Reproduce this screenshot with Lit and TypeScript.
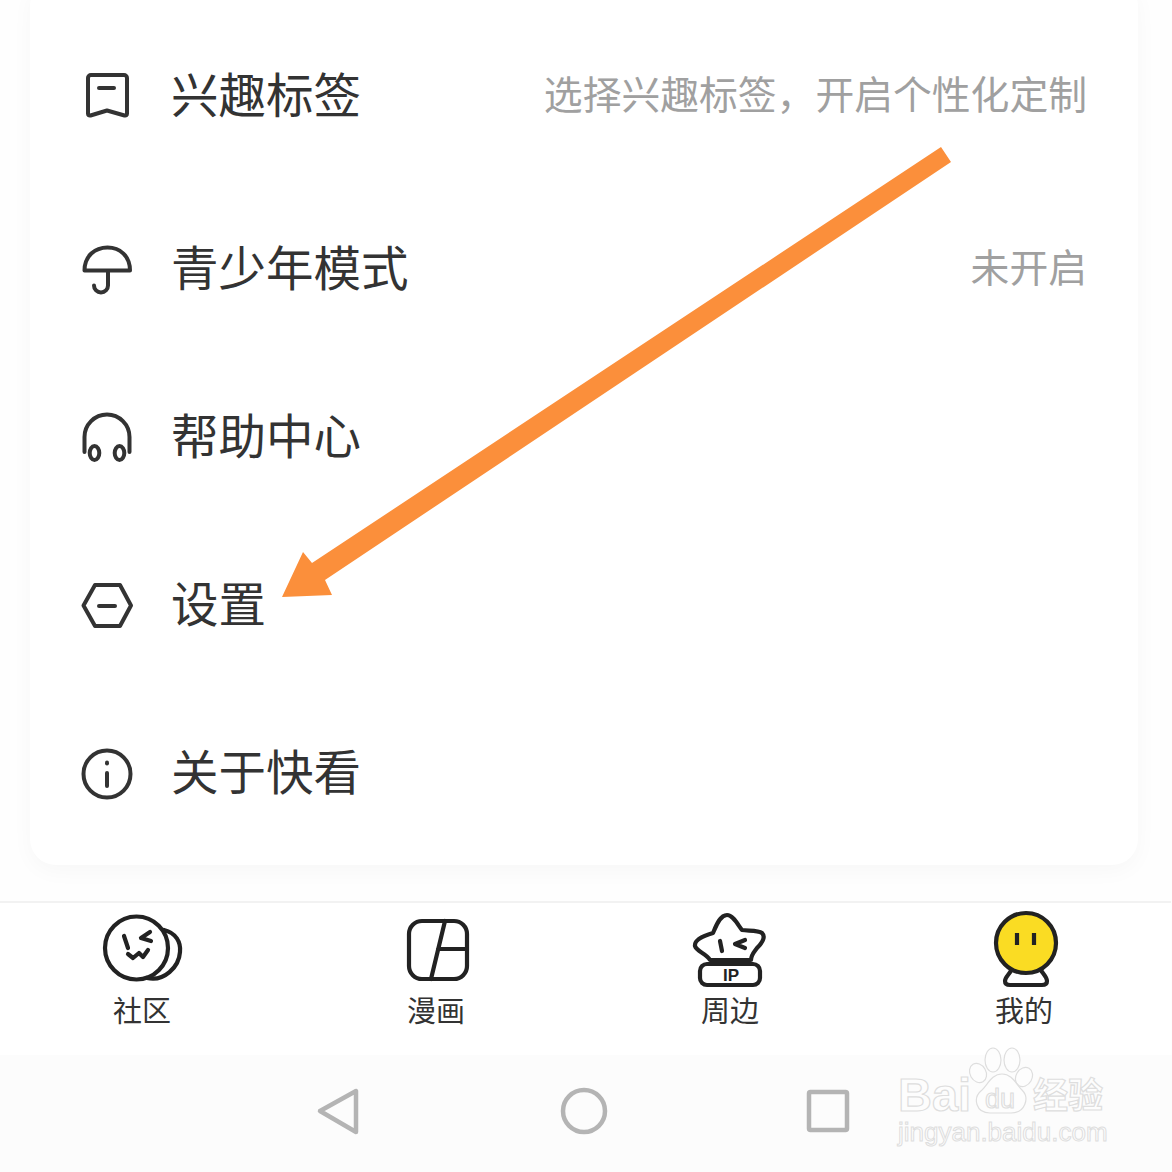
import { LitElement, html, svg, css } from 'lit';
import { customElement } from 'lit/decorators.js';

const rows = [
  {
    label: '兴趣标签',
    hint: '选择兴趣标签，开启个性化定制',
    icon: svg`<path d="M12 8H45a3 3 0 0 1 3 3V46.500q0 2.500-2.500 2L28 43.500 11.500 48.500q-2.500.5-2.500-2V11a3 3 0 0 1 3-3Z"/><path d="M20 21H35"/>`,
  },
  {
    label: '青少年模式',
    hint: '未开启',
    icon: svg`<path d="M5.500 30.500C5.500 16 16 7.500 28.500 7.500S51 16 51 30.500Z"/><path d="M29 31V45.500a7 7 0 0 1-14 0"/>`,
  },
  {
    label: '帮助中心',
    hint: '',
    icon: svg`<path d="M5.500 44V29a22.500 22.500 0 0 1 45 0V44"/><ellipse cx="15.500" cy="45" rx="4.800" ry="7"/><ellipse cx="40.500" cy="45" rx="4.800" ry="7"/>`,
  },
  {
    label: '设置',
    hint: '',
    icon: svg`<path d="M4.500 29.500 16 9H41L52 29.500 41 50H16Z"/><path d="M20 30H36"/>`,
  },
  {
    label: '关于快看',
    hint: '',
    icon: svg`<circle cx="28" cy="30" r="23.500"/><path d="M28 29V42"/><path d="M28 18.500V19.500"/>`,
  },
];

const tabs = [
  {
    label: '社区',
    box: '92 908 100 80',
    icon: svg`
      <path d="M164 929C176 932 181 941 180 951C179 966 164 981 147 977"/>
      <circle cx="136.500" cy="947" r="31.500"/>
      <path d="M124 935 128 947M150 931 141 937 151 940M128 953 133 957 139 952 143 956 148 949"/>`,
  },
  {
    label: '漫画',
    box: '386 908 100 80',
    icon: svg`
      <rect x="409" y="920" width="58" height="58" rx="13"/>
      <path d="M445 920 431 978M438 948H467"/>`,
  },
  {
    label: '周边',
    box: '680 908 100 80',
    icon: svg`
      <path d="M713 932C716 925 720 914 727 914C733 914 738 924 742 929C748 930 758 929 762 932C766 936 763 941 757 947C754 951 751 954 751 959H710C706 952 697 951 695 945C694 938 706 934 713 932Z"/>
      <rect x="700" y="963" width="60" height="21" rx="7"/>
      <path d="M720 940 722 950M745 939 735 943 745 947"/>
      <text x="731" y="980" class="ip">IP</text>`,
  },
  {
    label: '我的',
    box: '974 908 100 80',
    icon: svg`
      <path d="M1012 968C1009 974 1005 976 1005 980Q1005 984 1010 984H1042Q1047 984 1047 980C1047 976 1044 974 1040 968"/>
      <circle cx="1026" cy="942" r="30" fill="#fadc23"/>
      <path d="M1017 932V944M1034 932V944" stroke-linecap="butt"/>`,
  },
];

@customElement('app-root')
export class AppRoot extends LitElement {
  static styles = css`
    :host {
      display: block;
      position: relative;
      width: 1172px;
      height: 1172px;
      overflow: hidden;
      background: #fefefe;
      font-family: 'Noto Sans CJK SC', 'Noto Sans', sans-serif;
      color: #333;
    }
    .card {
      margin: -20px 34px 36px 30px;
      padding: 31px 52px 9px 49px;
      height: 885px;
      box-sizing: border-box;
      background: #fff;
      border-radius: 26px;
      box-shadow: 0 6px 22px rgba(0, 0, 0, 0.03);
    }
    .row {
      display: flex;
      align-items: center;
      height: 168px;
    }
    .row:first-child {
      margin-bottom: 5px;
    }
    .row-icon {
      width: 56px;
      height: 56px;
      margin-right: 36px;
      flex: none;
      fill: none;
      stroke: #333;
      stroke-width: 4;
      stroke-linecap: round;
      stroke-linejoin: round;
    }
    .label {
      font-size: 47.5px;
      line-height: 60px;
      margin-top: -5px;
    }
    .hint {
      margin-left: auto;
      margin-right: -1px;
      margin-top: -6px;
      font-size: 38.8px;
      line-height: 50px;
      color: #a0a0a0;
    }
    .tabs {
      display: grid;
      grid-template-columns: repeat(4, 294px);
      margin-left: -5px;
      width: 1176px;
      height: 154px;
      box-sizing: border-box;
      padding-top: 6px;
      border-top: 2px solid #f2f2f2;
      background: #fff;
    }
    .tab {
      display: flex;
      flex-direction: column;
      align-items: center;
    }
    .tab-icon {
      width: 100px;
      height: 80px;
      fill: none;
      stroke: #222;
      stroke-width: 4.2;
      stroke-linecap: round;
      stroke-linejoin: round;
    }
    .ip {
      font-family: 'Liberation Sans', sans-serif;
      font-size: 17px;
      font-weight: 700;
      text-anchor: middle;
      fill: #222;
      stroke: none;
    }
    .tab-label {
      margin-top: -3px;
      font-size: 29px;
      line-height: 46px;
      color: #333;
    }
    .sysbar {
      display: block;
      width: 1172px;
      height: 117px;
      background: #fcfcfc;
      fill: none;
      stroke: #b4b4b4;
      stroke-width: 4.5;
      stroke-linejoin: round;
    }
    .arrow,
    .mark {
      position: absolute;
      top: 0;
      left: 0;
      width: 1172px;
      height: 1172px;
      pointer-events: none;
    }
    .arrow {
      fill: #fb8f3b;
    }
    .mark {
      fill: #fdfdfd;
      stroke: #dedede;
      stroke-width: 1.2;
      font-family: 'Liberation Sans', sans-serif;
    }
    .mark .bai {
      font-size: 47px;
      font-weight: 700;
    }
    .mark .du {
      font-size: 27px;
    }
    .mark .jy {
      font-size: 35px;
      font-family: 'Noto Sans CJK SC', sans-serif;
      font-weight: 700;
    }
    .mark .url {
      font-size: 26px;
      stroke-width: 1;
    }
  `;

  render() {
    return html`
      <section class="card">
        ${rows.map(
          (row) => html`
            <div class="row">
              <svg class="row-icon" viewBox="0 0 56 56">${row.icon}</svg>
              <span class="label">${row.label}</span>
              ${row.hint ? html`<span class="hint">${row.hint}</span>` : ''}
            </div>
          `
        )}
      </section>

      <nav class="tabs">
        ${tabs.map(
          (tab) => html`
            <div class="tab">
              <svg class="tab-icon" viewBox=${tab.box}>${tab.icon}</svg>
              <span class="tab-label">${tab.label}</span>
            </div>
          `
        )}
      </nav>

      <svg class="sysbar" viewBox="0 1055 1172 117">
        <path d="M356 1091V1132L320 1111Z"/>
        <circle cx="584" cy="1111" r="21"/>
        <rect x="809" y="1092" width="38" height="38" rx="1.500"/>
      </svg>

      <!-- annotation arrow laid over the screenshot -->
      <svg class="arrow" viewBox="0 0 1172 1172">
        <path d="M941 147 951 162 325 580 332 595 282 597 303 552 312 563Z"/>
      </svg>

      <!-- watermark -->
      <svg class="mark" viewBox="0 0 1172 1172">
        <text class="bai" x="898" y="1111">Bai</text>
        <ellipse cx="978" cy="1073" rx="8" ry="10" transform="rotate(-30 978 1073)"/>
        <ellipse cx="993" cy="1060" rx="8" ry="12"/>
        <ellipse cx="1012" cy="1060" rx="8" ry="12"/>
        <ellipse cx="1024" cy="1077" rx="8" ry="10" transform="rotate(30 1024 1077)"/>
        <path d="M1002 1074C1012 1074 1016 1084 1022 1090C1030 1098 1025 1113 1011 1113H990C976 1113 972 1098 982 1090C988 1084 992 1074 1002 1074Z"/>
        <text class="du" x="985" y="1108">du</text>
        <text class="jy" x="1033" y="1108">经验</text>
        <text class="url" x="898" y="1141">jingyan.baidu.com</text>
      </svg>
    `;
  }
}
